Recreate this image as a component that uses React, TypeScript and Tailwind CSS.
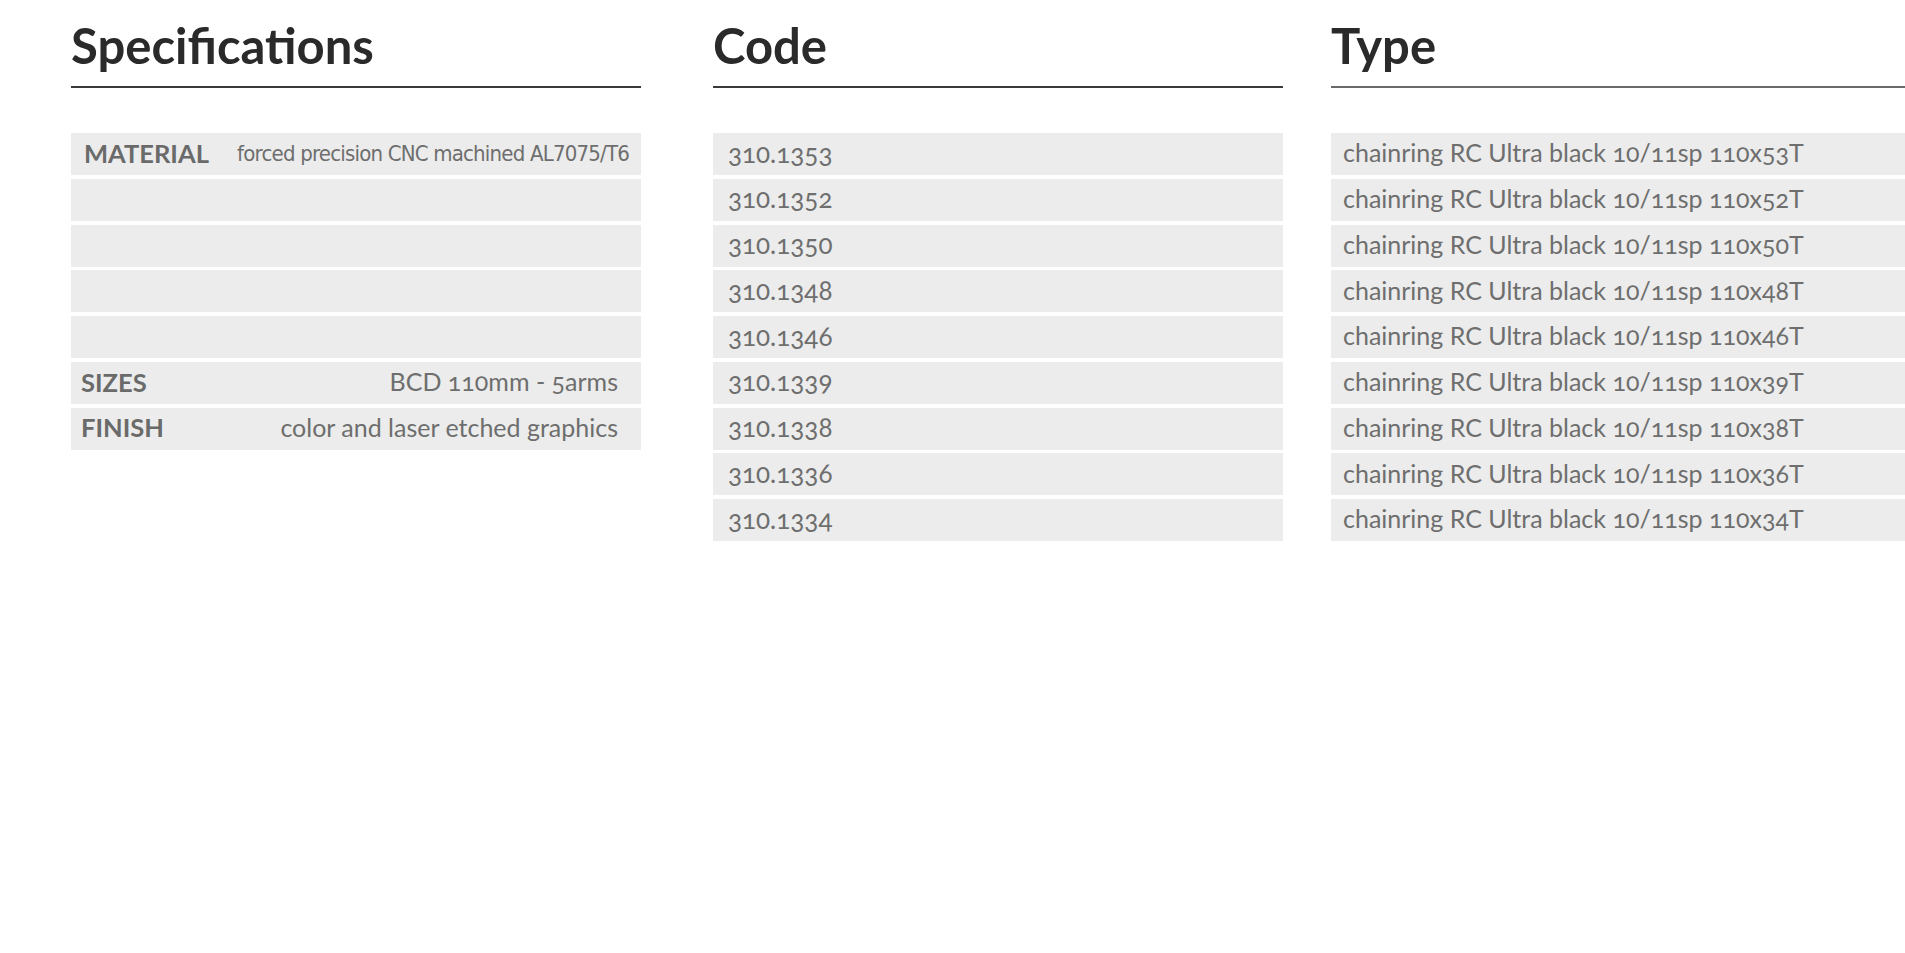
const font = { fontFamily: 'Lato, "Open Sans", sans-serif' }

const specs = [
  { label: 'MATERIAL', value: 'forced precision CNC machined AL7075/T6', narrow: true },
  { label: '', value: '' },
  { label: '', value: '' },
  { label: '', value: '' },
  { label: '', value: '' },
  { label: 'SIZES', value: 'BCD 110mm - 5arms' },
  { label: 'FINISH', value: 'color and laser etched graphics' },
]

const items = [
  { code: '310.1353', teeth: 53 },
  { code: '310.1352', teeth: 52 },
  { code: '310.1350', teeth: 50 },
  { code: '310.1348', teeth: 48 },
  { code: '310.1346', teeth: 46 },
  { code: '310.1339', teeth: 39 },
  { code: '310.1338', teeth: 38 },
  { code: '310.1336', teeth: 36 },
  { code: '310.1334', teeth: 34 },
]

function Heading({ title, lineClass }: { title: string; lineClass: string }) {
  return (
    <div>
      <h2 className="h-[86px] pt-[21px] text-[49px] font-bold leading-none text-[#2a2a2a]">{title}</h2>
      <div className={`h-[2px] ${lineClass}`} />
    </div>
  )
}

export default function App() {
  return (
    <div className="flex min-h-[953px] bg-white pl-[71px] text-[#6e6e6e]" style={font}>
      <section className="w-[570px] shrink-0">
        <Heading title="Specifications" lineClass="bg-[#3a3a3a]" />
        <div className="mt-[45px] flex flex-col gap-[3.75px]">
          {specs.map((s, i) => (
            <div
              className={`flex h-[42px] items-center justify-between bg-[#ebeceb] pb-[2px] ${
                s.narrow ? 'pl-[13px] pr-[12px]' : 'pl-[10px] pr-[23px]'
              }`}
              key={i}
            >
              <span className="text-[25.5px] font-bold text-[#6a6a6a]">{s.label}</span>
              <span
                className={s.narrow ? 'text-[22px] tracking-[-0.8px]' : 'text-[25px] oldstyle-nums'}
                style={s.narrow ? { fontFamily: '"Liberation Sans Narrow", "DejaVu Sans Condensed", sans-serif' } : undefined}
              >
                {s.value}
              </span>
            </div>
          ))}
        </div>
      </section>

      <section className="ml-[72px] w-[570px] shrink-0">
        <Heading title="Code" lineClass="bg-[#3a3a3a]" />
        <div className="mt-[45px] flex flex-col gap-[3.75px]">
          {items.map((it) => (
            <div className="flex h-[42px] items-center bg-[#ebeceb] pb-[2px] pl-[15px] text-[26px] oldstyle-nums" key={it.code}>
              {it.code}
            </div>
          ))}
        </div>
      </section>

      <section className="ml-[48px] min-w-0 flex-1">
        <Heading title="Type" lineClass="bg-[#6a6a6a]" />
        <div className="mt-[45px] flex flex-col gap-[3.75px]">
          {items.map((it) => (
            <div className="flex h-[42px] items-center bg-[#ebeceb] pb-[2px] pl-[12px] text-[25px] oldstyle-nums" key={it.code}>
              chainring RC Ultra black 10/11sp 110x{it.teeth}T
            </div>
          ))}
        </div>
      </section>
    </div>
  )
}
